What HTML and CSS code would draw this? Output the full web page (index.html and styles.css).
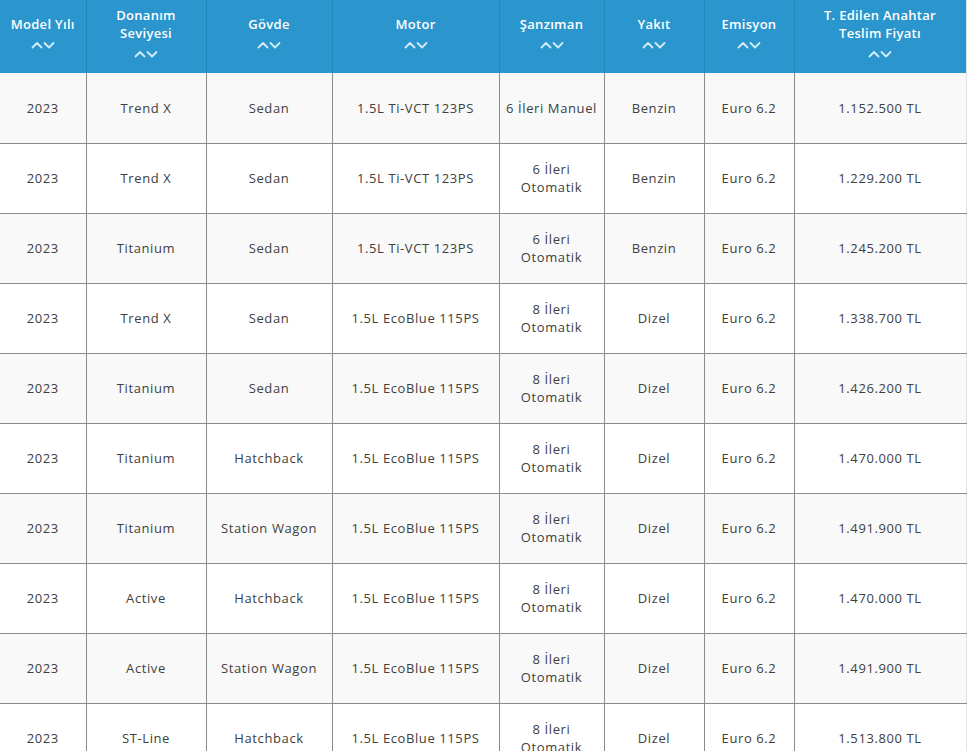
FILE: index.html
```html
<!DOCTYPE html>
<html lang="tr">
<head>
<meta charset="utf-8">
<link rel="stylesheet" href="styles.css">
</head>
<body>
<table class="price-table">
  <colgroup>
    <col class="c1"><col class="c2"><col class="c3"><col class="c4"><col class="c5"><col class="c6"><col class="c7"><col class="c8">
  </colgroup>
  <thead>
    <tr>
      <th class="tight"><span class="title">Model Yılı</span><svg class="sort" viewBox="0 0 24 8" width="24" height="8"><polyline points="1.5,6.5 6,2 10.5,6.5"/><polyline points="13.5,2 18,6.5 22.5,2"/></svg></th>
      <th><span class="title">Donanım Seviyesi</span><svg class="sort" viewBox="0 0 24 8" width="24" height="8"><polyline points="1.5,6.5 6,2 10.5,6.5"/><polyline points="13.5,2 18,6.5 22.5,2"/></svg></th>
      <th><span class="title">Gövde</span><svg class="sort" viewBox="0 0 24 8" width="24" height="8"><polyline points="1.5,6.5 6,2 10.5,6.5"/><polyline points="13.5,2 18,6.5 22.5,2"/></svg></th>
      <th><span class="title">Motor</span><svg class="sort" viewBox="0 0 24 8" width="24" height="8"><polyline points="1.5,6.5 6,2 10.5,6.5"/><polyline points="13.5,2 18,6.5 22.5,2"/></svg></th>
      <th><span class="title">Şanzıman</span><svg class="sort" viewBox="0 0 24 8" width="24" height="8"><polyline points="1.5,6.5 6,2 10.5,6.5"/><polyline points="13.5,2 18,6.5 22.5,2"/></svg></th>
      <th><span class="title">Yakıt</span><svg class="sort" viewBox="0 0 24 8" width="24" height="8"><polyline points="1.5,6.5 6,2 10.5,6.5"/><polyline points="13.5,2 18,6.5 22.5,2"/></svg></th>
      <th><span class="title">Emisyon</span><svg class="sort" viewBox="0 0 24 8" width="24" height="8"><polyline points="1.5,6.5 6,2 10.5,6.5"/><polyline points="13.5,2 18,6.5 22.5,2"/></svg></th>
      <th class="wide"><span class="title">T. Edilen Anahtar Teslim Fiyatı</span><svg class="sort" viewBox="0 0 24 8" width="24" height="8"><polyline points="1.5,6.5 6,2 10.5,6.5"/><polyline points="13.5,2 18,6.5 22.5,2"/></svg></th>
    </tr>
  </thead>
  <tbody>
    <tr><td>2023</td><td>Trend X</td><td>Sedan</td><td>1.5L Ti-VCT 123PS</td><td class="one">6 İleri Manuel</td><td>Benzin</td><td>Euro 6.2</td><td>1.152.500 TL</td></tr>
    <tr><td>2023</td><td>Trend X</td><td>Sedan</td><td>1.5L Ti-VCT 123PS</td><td>6 İleri Otomatik</td><td>Benzin</td><td>Euro 6.2</td><td>1.229.200 TL</td></tr>
    <tr><td>2023</td><td>Titanium</td><td>Sedan</td><td>1.5L Ti-VCT 123PS</td><td>6 İleri Otomatik</td><td>Benzin</td><td>Euro 6.2</td><td>1.245.200 TL</td></tr>
    <tr><td>2023</td><td>Trend X</td><td>Sedan</td><td>1.5L EcoBlue 115PS</td><td>8 İleri Otomatik</td><td>Dizel</td><td>Euro 6.2</td><td>1.338.700 TL</td></tr>
    <tr><td>2023</td><td>Titanium</td><td>Sedan</td><td>1.5L EcoBlue 115PS</td><td>8 İleri Otomatik</td><td>Dizel</td><td>Euro 6.2</td><td>1.426.200 TL</td></tr>
    <tr><td>2023</td><td>Titanium</td><td>Hatchback</td><td>1.5L EcoBlue 115PS</td><td>8 İleri Otomatik</td><td>Dizel</td><td>Euro 6.2</td><td>1.470.000 TL</td></tr>
    <tr><td>2023</td><td>Titanium</td><td>Station Wagon</td><td>1.5L EcoBlue 115PS</td><td>8 İleri Otomatik</td><td>Dizel</td><td>Euro 6.2</td><td>1.491.900 TL</td></tr>
    <tr><td>2023</td><td>Active</td><td>Hatchback</td><td>1.5L EcoBlue 115PS</td><td>8 İleri Otomatik</td><td>Dizel</td><td>Euro 6.2</td><td>1.470.000 TL</td></tr>
    <tr><td>2023</td><td>Active</td><td>Station Wagon</td><td>1.5L EcoBlue 115PS</td><td>8 İleri Otomatik</td><td>Dizel</td><td>Euro 6.2</td><td>1.491.900 TL</td></tr>
    <tr><td>2023</td><td>ST-Line</td><td>Hatchback</td><td>1.5L EcoBlue 115PS</td><td>8 İleri Otomatik</td><td>Dizel</td><td>Euro 6.2</td><td>1.513.800 TL</td></tr>
  </tbody>
</table>
</body>
</html>
```
FILE: styles.css
```css
html, body {
  margin: 0;
  padding: 0;
  background: #ffffff;
  overflow: hidden;
}

.price-table {
  width: 966px;
  table-layout: fixed;
  border-collapse: collapse;
  font-family: "Open Sans", "Liberation Sans", sans-serif;
  font-size: 13px;
  color: #404040;
  border-right: 1px solid #e2e2e2;
}

.c1 { width: 86px; }
.c2 { width: 120px; }
.c3 { width: 126px; }
.c4 { width: 167px; }
.c5 { width: 105px; }
.c6 { width: 100px; }
.c7 { width: 90px; }
.c8 { width: 172px; }

.price-table th {
  background: #2b95cd;
  color: #ffffff;
  font-weight: 600;
  letter-spacing: 0.3px;
  line-height: 18px;
  height: 73px;
  box-sizing: border-box;
  padding: 0 12px 9px;
  text-align: center;
  vertical-align: middle;
  border-left: 1px solid #2586bd;
}

.price-table th.tight {
  padding-left: 2px;
  padding-right: 2px;
  white-space: nowrap;
}

.price-table th.wide {
  padding-left: 14px;
  padding-right: 14px;
}

.price-table th:first-child {
  border-left: none;
}

.title {
  display: block;
}

.sort {
  display: block;
  margin: 8px auto 0;
  fill: none;
  stroke: #d3ecf8;
  stroke-width: 1.8;
  stroke-linecap: round;
  stroke-linejoin: round;
}

.price-table td {
  height: 70px;
  box-sizing: border-box;
  padding: 0 4px;
  text-align: center;
  vertical-align: middle;
  line-height: 18px;
  letter-spacing: 0.6px;
  border-left: 1px solid #8c8c8c;
  border-bottom: 1px solid #8c8c8c;
}

.price-table td:first-child {
  border-left: none;
}

.price-table tbody tr:nth-child(odd) td {
  background: #f9f9f9;
}

.one {
  white-space: nowrap;
}
```
